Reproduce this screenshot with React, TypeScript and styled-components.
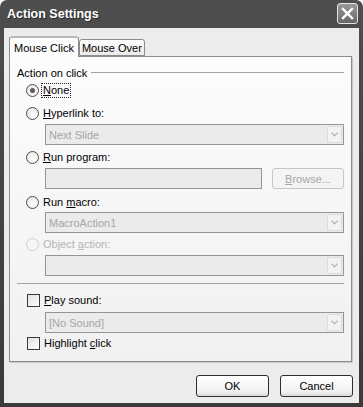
import styled, { createGlobalStyle } from "styled-components";

const GlobalStyle = createGlobalStyle`
  html, body {
    margin: 0;
    padding: 0;
    background: #ffffff;
  }
  body {
    font-family: "Liberation Sans", Arial, sans-serif;
    font-size: 11px;
    color: #000;
  }
`;

const DialogWindow = styled.div`
  width: 363px;
  height: 407px;
  box-sizing: border-box;
  display: flex;
  flex-direction: column;
  background: linear-gradient(#4e4e4e, #3a3a3a);
  border-radius: 7px 7px 0 0;
  padding: 0 4px 4px 4px;
`;

const TitleBar = styled.div`
  height: 28px;
  display: flex;
  align-items: center;
  justify-content: space-between;
  padding: 0 1px 1px 3px;
  box-sizing: border-box;
`;

const TitleText = styled.span`
  color: #ffffff;
  font-weight: bold;
  font-size: 12.5px;
  text-shadow: 1px 1px 0 #2a2a2a;
`;

const CloseButton = styled.div`
  width: 21px;
  height: 21px;
  box-sizing: border-box;
  border: 1px solid #e4e4e4;
  border-radius: 3px;
  background: linear-gradient(#9a9a9a, #666666);
  display: flex;
  align-items: center;
  justify-content: center;
`;

const DialogBody = styled.div`
  flex: 1;
  background: #ececec;
  display: flex;
  flex-direction: column;
  padding: 8px 7px 0 5px;
`;

const TabStrip = styled.div`
  display: flex;
  align-items: flex-end;
  height: 20px;
  position: relative;
  z-index: 1;
`;

const Tab = styled.div<{ $active?: boolean }>`
  box-sizing: border-box;
  height: ${(p) => (p.$active ? "21px" : "17px")};
  margin-bottom: ${(p) => (p.$active ? "-1px" : "0")};
  padding: 0 ${(p) => (p.$active ? "4px" : "2px")};
  border: 1px solid #8c8c8c;
  border-bottom: ${(p) => (p.$active ? "none" : "1px solid #8c8c8c")};
  border-top: ${(p) => (p.$active ? "2px solid #b8b8b8" : "1px solid #8c8c8c")};
  border-radius: 3px 3px 0 0;
  background: ${(p) => (p.$active ? "#fcfcfc" : "linear-gradient(#fdfdfd, #ebebeb)")};
  display: flex;
  align-items: center;
  padding-top: ${(p) => (p.$active ? "1px" : "0")};
`;

const TabPanel = styled.div`
  height: 306px;
  box-sizing: border-box;
  border: 1px solid #8c8c8c;
  background: linear-gradient(#fcfcfc, #f1f1f1);
  box-shadow: 1px 1px 0 #c8c8c8;
  padding: 9px 7px 0 7px;
  display: flex;
  flex-direction: column;
`;

const GroupHeader = styled.div`
  height: 13px;
  display: flex;
  align-items: center;
  gap: 4px;
`;

const Rule = styled.div`
  flex: 1;
  height: 1px;
  background: #a4a4a4;
`;

const SeparatorLine = styled.div<{ $mt: number }>`
  height: 1px;
  background: #a4a4a4;
  margin-top: ${(p) => p.$mt}px;
`;

const OptionRow = styled.div<{ $mt: number; $disabled?: boolean }>`
  height: 16px;
  margin-top: ${(p) => p.$mt}px;
  margin-left: 9px;
  display: flex;
  align-items: center;
  gap: 3px;
  color: ${(p) => (p.$disabled ? "#b4b4b4" : "#000")};
`;

const RadioCircle = styled.span<{ $checked?: boolean; $disabled?: boolean }>`
  width: 13px;
  height: 13px;
  box-sizing: border-box;
  border-radius: 50%;
  border: 1px solid ${(p) => (p.$disabled ? "#cfcfcf" : "#4c4c4c")};
  background: ${(p) => (p.$disabled ? "#f6f6f6" : "radial-gradient(circle at 65% 65%, #ffffff, #e2e2e2)")};
  display: flex;
  align-items: center;
  justify-content: center;
  &::after {
    content: "";
    width: 5px;
    height: 5px;
    border-radius: 50%;
    background: ${(p) => (p.$checked ? "#5a5a5a" : "transparent")};
  }
`;

const CheckBox = styled.span`
  width: 13px;
  height: 13px;
  margin-left: 1px;
  box-sizing: border-box;
  border: 1px solid #3a3a3a;
  background: linear-gradient(135deg, #e0e0e0, #ffffff);
`;

const Label = styled.span<{ $focus?: boolean }>`
  padding: 0 1px;
  line-height: 13px;
  border: 1px dotted ${(p) => (p.$focus ? "#222" : "transparent")};
  margin-left: -1px;
`;

const Key = styled.span`
  text-decoration: underline;
  text-underline-offset: 1px;
`;

const FieldRow = styled.div<{ $mt: number }>`
  margin-top: ${(p) => p.$mt}px;
  margin-left: 28px;
  display: flex;
  gap: 10px;
`;

const DisabledField = styled.div<{ $width?: number }>`
  flex: ${(p) => (p.$width ? "none" : "1")};
  width: ${(p) => (p.$width ? `${p.$width}px` : "auto")};
  height: 21px;
  box-sizing: border-box;
  border: 1px solid #959595;
  background: #ebebeb;
  color: #a6a6a6;
  display: flex;
  align-items: center;
  padding-left: 3px;
`;

const FieldText = styled.span`
  flex: 1;
`;

const DropButton = styled.span`
  width: 15px;
  height: 17px;
  margin-right: 1px;
  box-sizing: border-box;
  border: 1px solid #dcdcdc;
  border-radius: 2px;
  background: #f2f2f2;
  display: flex;
  align-items: center;
  justify-content: center;
`;

const DisabledButton = styled.div`
  width: 74px;
  height: 21px;
  box-sizing: border-box;
  border: 1px solid #c6c6c6;
  border-radius: 3px;
  background: #f4f4f4;
  color: #a6a6a6;
  display: flex;
  align-items: center;
  justify-content: center;
`;

const ButtonRow = styled.div`
  display: flex;
  justify-content: flex-end;
  gap: 11px;
  margin-top: 13px;
  margin-right: -1px;
`;

const PushButton = styled.div`
  width: 73px;
  height: 22px;
  box-sizing: border-box;
  border: 1px solid #2e2e2e;
  border-radius: 3px;
  background: linear-gradient(#ffffff, #f0f0f0 80%, #d8d8d8);
  display: flex;
  align-items: center;
  justify-content: center;
`;

function Chevron() {
  return (
    <svg width="7" height="5" viewBox="0 0 7 5">
      <path d="M0.5 0.8 L3.5 3.8 L6.5 0.8" fill="none" stroke="#b8b8b8" strokeWidth="1.3" />
    </svg>
  );
}

function Combo({ value }: { value?: string }) {
  return (
    <DisabledField>
      <FieldText>{value}</FieldText>
      <DropButton>
        <Chevron />
      </DropButton>
    </DisabledField>
  );
}

export default function App() {
  return (
    <>
      <GlobalStyle />
      <DialogWindow>
        <TitleBar>
          <TitleText>Action Settings</TitleText>
          <CloseButton>
            <svg width="13" height="13" viewBox="0 0 13 13">
              <path d="M2 2 L11 11 M11 2 L2 11" stroke="#ffffff" strokeWidth="2.4" strokeLinecap="square" />
            </svg>
          </CloseButton>
        </TitleBar>
        <DialogBody>
          <TabStrip>
            <Tab $active>Mouse Click</Tab>
            <Tab>Mouse Over</Tab>
          </TabStrip>
          <TabPanel>
            <GroupHeader>
              <span>Action on click</span>
              <Rule />
            </GroupHeader>

            <OptionRow $mt={3}>
              <RadioCircle $checked />
              <Label $focus>
                <Key>N</Key>one
              </Label>
            </OptionRow>

            <OptionRow $mt={7}>
              <RadioCircle />
              <Label>
                <Key>H</Key>yperlink to:
              </Label>
            </OptionRow>
            <FieldRow $mt={3}>
              <Combo value="Next Slide" />
            </FieldRow>

            <OptionRow $mt={4}>
              <RadioCircle />
              <Label>
                <Key>R</Key>un program:
              </Label>
            </OptionRow>
            <FieldRow $mt={3}>
              <DisabledField $width={217} />
              <DisabledButton>
                <span>
                  <Key>B</Key>rowse...
                </span>
              </DisabledButton>
            </FieldRow>

            <OptionRow $mt={5}>
              <RadioCircle />
              <Label>
                Run <Key>m</Key>acro:
              </Label>
            </OptionRow>
            <FieldRow $mt={2}>
              <Combo value="MacroAction1" />
            </FieldRow>

            <OptionRow $mt={3} $disabled>
              <RadioCircle $disabled />
              <Label>
                Object <Key>a</Key>ction:
              </Label>
            </OptionRow>
            <FieldRow $mt={3}>
              <Combo />
            </FieldRow>

            <SeparatorLine $mt={7} />

            <OptionRow $mt={8}>
              <CheckBox />
              <Label>
                <Key>P</Key>lay sound:
              </Label>
            </OptionRow>
            <FieldRow $mt={4}>
              <Combo value="[No Sound]" />
            </FieldRow>

            <OptionRow $mt={2}>
              <CheckBox />
              <Label>
                Highlight <Key>c</Key>lick
              </Label>
            </OptionRow>
          </TabPanel>
          <ButtonRow>
            <PushButton>OK</PushButton>
            <PushButton>Cancel</PushButton>
          </ButtonRow>
        </DialogBody>
      </DialogWindow>
    </>
  );
}
